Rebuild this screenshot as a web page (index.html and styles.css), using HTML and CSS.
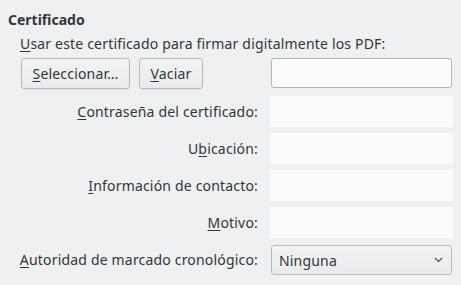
FILE: index.html
```html
<!DOCTYPE html>
<html lang="es">
<head>
<meta charset="utf-8">
<link rel="stylesheet" href="styles.css">
</head>
<body>
<div class="panel">
  <div class="title">Certificado</div>
  <div class="section">
    <div class="intro"><u>U</u>sar este certificado para firmar digitalmente los PDF:</div>
    <div class="form">
      <div class="buttons">
        <button class="btn btn-select"><u>S</u>eleccionar…</button>
        <button class="btn btn-clear"><u>V</u>aciar</button>
      </div>
      <div class="field field-edit"></div>

      <div class="label"><u>C</u>ontraseña del certificado:</div>
      <div class="field field-off"></div>

      <div class="label">U<u>b</u>icación:</div>
      <div class="field field-off"></div>

      <div class="label"><u>I</u>nformación de contacto:</div>
      <div class="field field-off"></div>

      <div class="label"><u>M</u>otivo:</div>
      <div class="field field-off"></div>

      <div class="label"><u>A</u>utoridad de marcado cronológico:</div>
      <div class="field combo">
        <span class="combo-text">Ninguna</span>
        <svg class="chev" width="9" height="6" viewBox="0 0 9 6"><path d="M1 1 L4.5 4.5 L8 1" fill="none" stroke="#4d4d4d" stroke-width="1.1"/></svg>
      </div>
    </div>
  </div>
</div>
</body>
</html>
```

FILE: styles.css
```css
html, body {
  margin: 0;
  padding: 0;
  background: #eff0f1;
}
body {
  font-family: "Noto Sans", "Open Sans", sans-serif;
  font-size: 14px;
  letter-spacing: 0.18px;
  color: #31363b;
  width: 461px;
  height: 285px;
  overflow: hidden;
}
u {
  text-decoration: underline;
  text-underline-offset: 2px;
}
.panel {
  padding: 10px 0 0 8px;
}
.title {
  font-weight: bold;
  letter-spacing: 0;
  line-height: 19px;
}
.section {
  padding-left: 12px;
}
.intro {
  line-height: 19px;
  margin-top: 5px;
  white-space: nowrap;
}
.form {
  display: grid;
  grid-template-columns: 238px 183px;
  column-gap: 12px;
  row-gap: 6px;
  margin-top: 5px;
}
.buttons {
  display: flex;
  gap: 9px;
  padding-left: 1px;
  height: 31px;
  margin-bottom: 1px;
}
.btn {
  font: inherit;
  letter-spacing: inherit;
  color: inherit;
  height: 31px;
  padding: 0 6px;
  background: linear-gradient(#f1f2f3, #eaebec);
  border: 1px solid #b9babb;
  border-radius: 3px;
  box-shadow: 0 1px 1px rgba(0,0,0,0.06);
}
.btn-select { width: 109px; }
.btn-clear { width: 64px; }
.label {
  justify-self: end;
  white-space: nowrap;
  line-height: 31px;
  height: 31px;
}
.field {
  height: 31px;
  box-sizing: border-box;
}
.field-edit {
  height: 30px;
  margin: 0 1px;
  background: #fcfcfc;
  border: 1px solid #b4b5b6;
  border-radius: 3px;
}
.field-off {
  background: #fcfcfc;
}
.combo {
  height: 30px;
  margin: 1px 1px 0;
  border: 1px solid #b9babb;
  border-radius: 3px;
  background: linear-gradient(#f1f2f3, #eaebec);
  display: flex;
  align-items: center;
  justify-content: space-between;
  padding: 0 8px 0 7px;
}
.combo-text {
  line-height: 19px;
}
.chev {
  display: block;
}
```
